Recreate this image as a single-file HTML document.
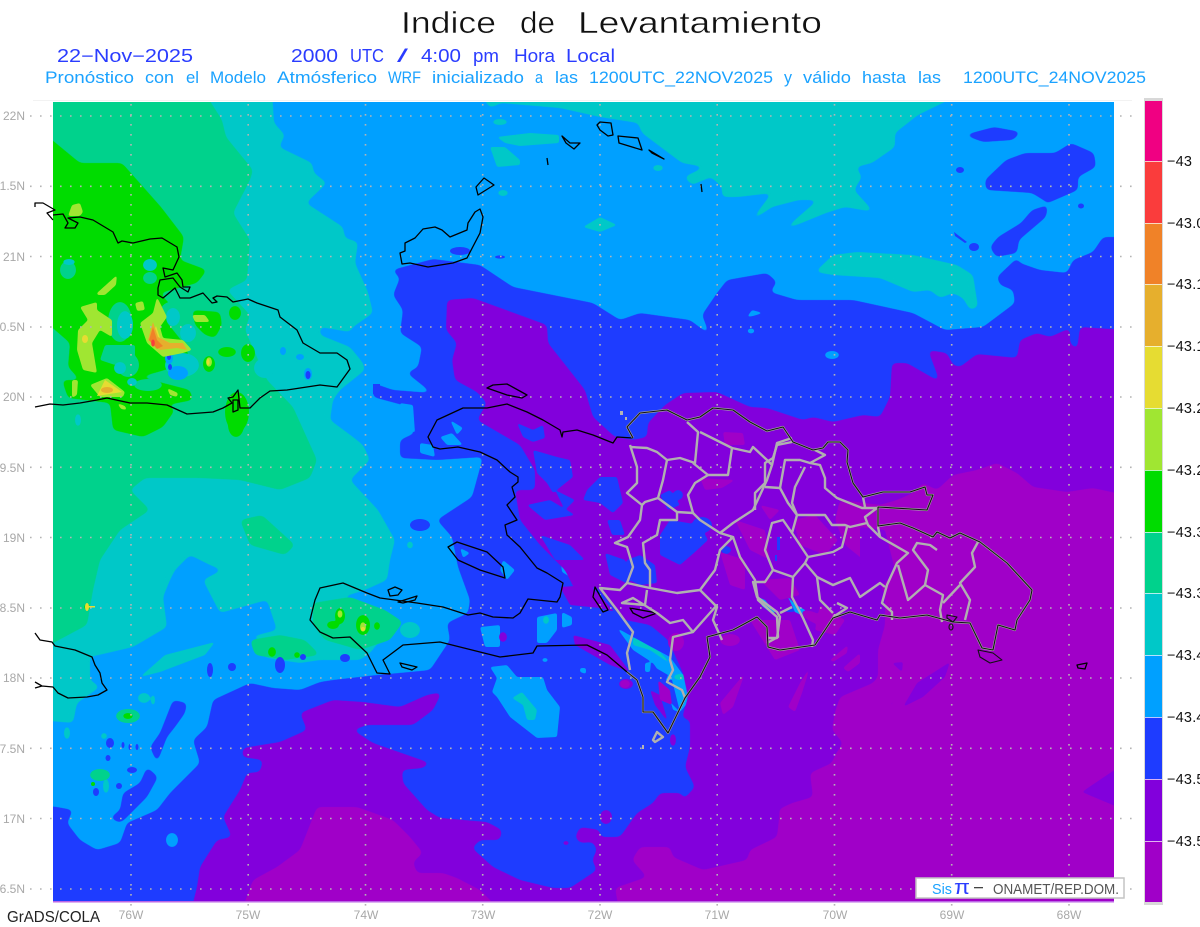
<!DOCTYPE html>
<html lang="es">
<head>
<meta charset="utf-8">
<title>Indice de Levantamiento</title>
<style>
html,body{margin:0;padding:0;background:#fff;}
body{width:1200px;height:927px;overflow:hidden;}
svg{display:block;}
text{font-family:"Liberation Sans",sans-serif;}
</style>
</head>
<body>
<svg width="1200" height="927" viewBox="0 0 1200 927" xmlns="http://www.w3.org/2000/svg">
<defs>
<filter id="s" x="-5%" y="-5%" width="110%" height="110%" color-interpolation-filters="sRGB"><feGaussianBlur stdDeviation="2.6"/><feComponentTransfer><feFuncA type="linear" slope="9" intercept="-4"/></feComponentTransfer></filter>
<filter id="t" x="-10%" y="-10%" width="120%" height="120%" color-interpolation-filters="sRGB"><feGaussianBlur stdDeviation="1"/><feComponentTransfer><feFuncA type="linear" slope="6" intercept="-2.5"/></feComponentTransfer></filter>
</defs>
<rect width="1200" height="927" fill="#fff"/>
<!-- titles -->
<g font-size="31" fill="#111" stroke="#fff" stroke-width=".45" lengthAdjust="spacingAndGlyphs">
<text x="401" y="33" textLength="95" lengthAdjust="spacingAndGlyphs">Indice</text>
<text x="520" y="33" textLength="35" lengthAdjust="spacingAndGlyphs">de</text>
<text x="578" y="33" textLength="244" lengthAdjust="spacingAndGlyphs">Levantamiento</text>
</g>
<g font-size="18" fill="#2a3cff">
<text x="57" y="62" textLength="136" lengthAdjust="spacingAndGlyphs">22−Nov−2025</text>
<text x="291" y="62" textLength="47" lengthAdjust="spacingAndGlyphs">2000</text>
<text x="350" y="62" textLength="34" lengthAdjust="spacingAndGlyphs">UTC</text>
<text x="397" y="62" textLength="11" lengthAdjust="spacingAndGlyphs">/</text>
<text x="421" y="62" textLength="40" lengthAdjust="spacingAndGlyphs">4:00</text>
<text x="473" y="62" textLength="26" lengthAdjust="spacingAndGlyphs">pm</text>
<text x="514" y="62" textLength="41" lengthAdjust="spacingAndGlyphs">Hora</text>
<text x="566" y="62" textLength="49" lengthAdjust="spacingAndGlyphs">Local</text>
</g>
<g font-size="16.5" fill="#1aa2ff">
<text x="45" y="83" textLength="89" lengthAdjust="spacingAndGlyphs">Pronóstico</text>
<text x="145" y="83" textLength="29" lengthAdjust="spacingAndGlyphs">con</text>
<text x="186" y="83" textLength="13" lengthAdjust="spacingAndGlyphs">el</text>
<text x="210" y="83" textLength="56" lengthAdjust="spacingAndGlyphs">Modelo</text>
<text x="277" y="83" textLength="100" lengthAdjust="spacingAndGlyphs">Atmósferico</text>
<text x="388" y="83" textLength="33" lengthAdjust="spacingAndGlyphs">WRF</text>
<text x="432" y="83" textLength="92" lengthAdjust="spacingAndGlyphs">inicializado</text>
<text x="535" y="83" textLength="8" lengthAdjust="spacingAndGlyphs">a</text>
<text x="555" y="83" textLength="23" lengthAdjust="spacingAndGlyphs">las</text>
<text x="589" y="83" textLength="184" lengthAdjust="spacingAndGlyphs">1200UTC_22NOV2025</text>
<text x="784" y="83" textLength="8" lengthAdjust="spacingAndGlyphs">y</text>
<text x="803" y="83" textLength="48" lengthAdjust="spacingAndGlyphs">válido</text>
<text x="862" y="83" textLength="44" lengthAdjust="spacingAndGlyphs">hasta</text>
<text x="918" y="83" textLength="23" lengthAdjust="spacingAndGlyphs">las</text>
<text x="963" y="83" textLength="183" lengthAdjust="spacingAndGlyphs">1200UTC_24NOV2025</text>
</g>
<line x1="33" y1="100.5" x2="1132" y2="100.5" stroke="#f2f2f2"/>

<clipPath id="m"><rect x="53" y="102" width="1061" height="799"/></clipPath>
<g clip-path="url(#m)">
<rect x="53" y="102" width="1061" height="799" fill="#00a0ff"/>
<!-- cyan -->
<g fill="#00c8c8" filter="url(#s)">
<polygon points="40,90 272,90 274,123 285,135 279,147 312,163 314,173 327,183 306,203 343,227 345,238 358,242 355,263 368,292 373,313 353,327 350,332 320,327 320,335 350,347 363,363 365,370 340,390 333,400 330,420 353,437 363,445 370,460 350,480 378,510 395,540 390,560 387,580 365,590 310,607 267,600 220,613 203,580 222,570 210,565 190,555 175,570 170,580 163,597 167,627 133,647 90,657 90,680 100,687 77,703 73,723 40,720"/>
<polygon points="478,90 490,108 501,103 560,108 600,117 638,123 642,133 682,163 705,167 684,177 692,185 711,177 722,187 722,197 738,197 772,193 749,223 772,207 799,200 818,200 782,231 826,213 845,207 874,212 854,190 862,177 856,167 872,163 895,147 895,133 918,115 969,90"/>
<polygon points="815,272 833,255 857,252 913,255 957,265 973,275 978,307 970,310 963,298 953,293 940,298 930,290 913,292 880,278 833,275"/>
<polygon points="267,600 277,630 250,637 267,643 263,657 280,660 300,663 320,660 360,660 370,653 383,637 400,623 390,617 333,593"/>
</g>
<g fill="#00c8c8" filter="url(#t)">
<polygon points="497,137 530,133 559,135 559,143 520,146 505,143"/>
<polygon points="490,147 505,147 520,160 520,165 497,167"/>
<polygon points="583,227 600,217 617,225 600,232"/>
<polygon points="140,677 165,655 215,642 205,655 160,672"/>
<ellipse cx="658" cy="168" rx="5" ry="3"/>
<ellipse cx="500" cy="122" rx="7" ry="3"/>
<ellipse cx="503" cy="193" rx="5" ry="3"/>
<ellipse cx="144" cy="698" rx="6" ry="5"/>
<ellipse cx="153" cy="700" rx="2" ry="5"/>
<ellipse cx="67" cy="733" rx="3" ry="6"/>
<ellipse cx="104" cy="736" rx="3" ry="3"/>
<ellipse cx="106" cy="786" rx="3" ry="7"/>
<ellipse cx="410" cy="630" rx="10" ry="8"/>
</g>
<!-- sea green -->
<g fill="#00d28c" filter="url(#s)">
<polygon points="40,90 203,90 222,120 226,137 253,170 250,180 233,213 250,240 247,280 227,290 250,315 245,330 267,380 293,407 317,460 310,478 280,490 240,480 200,478 145,478 130,490 150,510 120,530 100,560 93,590 87,625 40,650"/>
<polygon points="240,520 262,515 295,545 285,555 250,545"/>
<polygon points="313,603 350,597 385,610 403,622 390,640 360,650 325,640 313,625"/>
<polygon points="250,640 280,635 305,640 320,655 285,660 255,655"/>
</g>
<g fill="#00d28c" filter="url(#t)">
<ellipse cx="128" cy="716" rx="12" ry="7"/>
<ellipse cx="100" cy="775" rx="10" ry="6"/>
</g>
<!-- bright green -->
<g fill="#00dc00" filter="url(#s)">
<polygon points="40,130 80,163 122,163 161,207 184,237 180,260 207,270 197,283 160,293 175,310 165,320 185,345 190,360 165,370 140,377 190,390 193,400 167,405 175,410 163,427 143,437 113,430 110,403 68,398 62,380 80,380 68,367 70,343 40,317"/>
<polygon points="192,310 220,312 222,325 215,338 205,335 195,325"/>
</g>
<g fill="#00dc00" filter="url(#t)">
<ellipse cx="235" cy="313" rx="6" ry="7"/>
<ellipse cx="227" cy="352" rx="9" ry="5"/>
<ellipse cx="248" cy="353" rx="7" ry="9"/>
<ellipse cx="209" cy="364" rx="6" ry="8"/>
<ellipse cx="237" cy="412" rx="12" ry="20"/>
<ellipse cx="236" cy="425" rx="8" ry="12"/>
<ellipse cx="272" cy="652" rx="4" ry="5"/>
<ellipse cx="297" cy="655" rx="3" ry="3"/>
<ellipse cx="340" cy="616" rx="5" ry="8"/>
<ellipse cx="333" cy="625" rx="6" ry="4"/>
<ellipse cx="363" cy="625" rx="7" ry="10"/>
<ellipse cx="377" cy="626" rx="3" ry="4"/>
<ellipse cx="128" cy="716" rx="5" ry="3"/>
<ellipse cx="87" cy="607" rx="3" ry="3"/>
</g>
<ellipse cx="93" cy="784" rx="2" ry="2" fill="#00dc00"/>
<!-- swirl interior -->
<g fill="#00d28c" filter="url(#t)">
<ellipse cx="150" cy="278" rx="7" ry="6"/>
<ellipse cx="68" cy="270" rx="8" ry="9"/>
<ellipse cx="120" cy="322" rx="12" ry="20"/>
<ellipse cx="128" cy="365" rx="11" ry="12"/>
<ellipse cx="175" cy="310" rx="14" ry="9"/>
<polygon points="105,345 135,345 135,355 115,365 100,360"/>
<ellipse cx="148" cy="385" rx="14" ry="6"/>
</g>
<g fill="#00c8c8" filter="url(#t)">
<ellipse cx="125" cy="325" rx="8" ry="14"/>
<ellipse cx="173" cy="317" rx="7" ry="9"/>
<ellipse cx="188" cy="333" rx="8" ry="9"/>
<ellipse cx="150" cy="265" rx="7" ry="6"/>
<ellipse cx="182" cy="365" rx="17" ry="12"/>
<ellipse cx="120" cy="368" rx="6" ry="6"/>
<ellipse cx="132" cy="382" rx="5" ry="4"/>
<ellipse cx="265" cy="368" rx="11" ry="10"/>
<ellipse cx="283" cy="351" rx="6" ry="7"/>
<ellipse cx="300" cy="357" rx="7" ry="6"/>
<ellipse cx="78" cy="420" rx="3" ry="6"/>
<ellipse cx="69" cy="262" rx="6" ry="3"/>
</g>
<g fill="#00a0ff">
<ellipse cx="178" cy="373" rx="10" ry="7"/>
<ellipse cx="169" cy="358" rx="4" ry="6"/>
<ellipse cx="283" cy="351" rx="3" ry="4"/>
<ellipse cx="300" cy="357" rx="4" ry="3"/>
<ellipse cx="308" cy="374" rx="4" ry="6"/>
</g>
<g fill="#1e3cff">
<ellipse cx="169" cy="357" rx="2" ry="3"/>
<ellipse cx="170" cy="367" rx="2" ry="3"/>
<ellipse cx="308" cy="375" rx="2.5" ry="4"/>
<rect x="373" y="384" width="7" height="10"/>
</g>
<!-- lime -->
<g fill="#a0e632" filter="url(#t)">
<polygon points="72,205 80,203 83,212 80,216 68,216"/>
<polygon points="97,293 117,275 116,285 105,295 97,295"/>
<polygon points="80,307 97,302 97,310 112,320 112,337 100,330 92,343 97,373 83,370 77,350 78,330 88,320"/>
<polygon points="90,385 107,378 125,392 123,397 100,397"/>
<polygon points="72,380 78,380 77,395 72,398"/>
<polygon points="157,297 167,317 160,327 163,338 183,340 192,350 183,353 163,357 147,343 140,323 153,313"/>
<polygon points="135,303 143,301 145,310 137,311"/>
<polygon points="192,315 205,315 210,322 195,322"/>
<polygon points="167,388 178,393 177,397 170,395"/>
<polygon points="117,403 125,406 127,410 121,409"/>
<ellipse cx="209" cy="362" rx="3" ry="5"/>
<ellipse cx="363" cy="627" rx="3" ry="5"/>
<ellipse cx="340" cy="614" rx="2.5" ry="4"/>
</g>
<g fill="#e6dc32">
<polygon points="105,380 122,392 97,396"/>
<ellipse cx="85" cy="339" rx="3" ry="4"/>
<ellipse cx="208" cy="362" rx="1.5" ry="3"/>
<ellipse cx="87" cy="607" rx="2" ry="4"/>
<rect x="87" y="606" width="8" height="1.5"/>
<ellipse cx="363" cy="629" rx="2" ry="2"/>
<polygon points="156,326 160,338 172,344 165,345 150,340"/>
</g>
<g fill="#e6af2d">
<polygon points="153,322 158,337 170,343 183,343 187,350 177,348 160,350 148,340"/>
<ellipse cx="107" cy="390" rx="6" ry="3"/>
</g>
<g fill="#f08228"><polygon points="153,327 157,340 163,346 157,349 149,340"/></g>
<g fill="#fa3c3c"><ellipse cx="153" cy="343" rx="1.8" ry="3.5"/></g>

<!-- blue -->
<g fill="#1e3cff" filter="url(#s)">
<polygon points="392,270 433,259 480,265 513,287 593,303 620,320 640,313 690,320 710,335 702,315 717,293 727,280 767,273 777,282 770,292 797,300 853,300 913,313 945,330 983,327 1015,303 1013,290 1000,285 997,277 1017,258 1020,263 1040,270 1067,273 1073,260 1093,252 1103,237 1125,237 1125,915 40,915 40,805 57,807 73,810 67,823 80,840 97,850 120,843 127,823 157,810 170,793 200,763 193,740 207,727 213,700 250,683 273,688 300,690 320,682 333,680 377,675 410,672 430,670 450,640 447,623 468,613 470,600 458,567 452,537 437,520 472,497 483,457 437,460 400,458 400,440 415,433 408,420 415,417 410,407 373,397 373,383 393,390 432,393 407,373 418,367 422,347 400,333 403,310 393,295 400,278"/>
<polygon points="173,700 187,703 185,713 175,727 167,737 157,763 150,747 160,733"/>
<polygon points="147,767 158,777 147,797 127,817 120,823 110,818 120,810 123,793 140,783"/>
<polygon points="964,135 994,127 1021,132 1013,140 983,142"/>
<polygon points="1071,143 1094,153 1096,167 1078,177 1078,190 1048,203 1032,193 986,190 985,180 1006,160 1025,153 1055,153"/>
<polygon points="1048,205 1046,217 1019,240 1017,253 996,257 990,247 998,237 1021,223 1032,210"/>
</g>
<g fill="#1e3cff">
<ellipse cx="960" cy="170" rx="4" ry="3"/>
<ellipse cx="1081" cy="206" rx="3" ry="2.5"/>
<polygon points="954,232 967,242 965,243 955,236"/>
<ellipse cx="974" cy="247" rx="5" ry="4"/>
<ellipse cx="460" cy="251" rx="10" ry="4"/>
<ellipse cx="500" cy="257" rx="5" ry="1.6"/>
<ellipse cx="210" cy="670" rx="3" ry="7"/>
<ellipse cx="232" cy="667" rx="4" ry="4"/>
<ellipse cx="280" cy="665" rx="5" ry="8"/>
<ellipse cx="303" cy="657" rx="3" ry="3"/>
<ellipse cx="345" cy="658" rx="5" ry="4"/>
<ellipse cx="110" cy="743" rx="4" ry="5"/>
<ellipse cx="132" cy="770" rx="5" ry="3"/>
<ellipse cx="96" cy="792" rx="3" ry="4"/>
<ellipse cx="119" cy="786" rx="3" ry="3"/>
<ellipse cx="108" cy="758" rx="2.5" ry="3"/>
<ellipse cx="130" cy="747" rx="1.5" ry="3"/>
<ellipse cx="137" cy="747" rx="1.5" ry="3"/>
<ellipse cx="123" cy="745" rx="1.5" ry="3"/>
<ellipse cx="420" cy="525" rx="10" ry="6"/>
</g>
<!-- sky patches in blue -->
<g fill="#00a0ff" filter="url(#t)">
<polygon points="747,317 752,310 763,313 753,316"/>
<ellipse cx="751" cy="331" rx="3.5" ry="2.5"/>
<ellipse cx="832" cy="355" rx="7" ry="4"/>
<ellipse cx="172" cy="840" rx="6" ry="7"/>
<polygon points="490,667 507,665 517,677 543,677 547,690 560,707 557,737 537,738 510,717 497,697 492,692 497,678"/>
<polygon points="440,437 452,433 463,445 447,445"/>
<polygon points="450,420 463,428 457,435"/>
<polygon points="420,443 433,445 435,457 420,453"/>
<polygon points="400,403 413,405 415,433 400,425"/>
<polygon points="503,560 515,570 507,580 500,570"/>
<polygon points="560,555 568,560 570,572 590,577 575,580 562,572"/>
<polygon points="460,548 470,553 463,558"/>
<polygon points="537,617 557,613 557,630 547,643 537,643"/>
<polygon points="480,627 500,625 500,647 485,647"/>
<polygon points="562,612 572,617 572,625 562,628"/>
<ellipse cx="545" cy="660" rx="3" ry="2"/>
<polygon points="617,628 633,637 670,657 687,680 690,700 680,712 673,710 665,680 653,663 633,650"/>
<polygon points="645,663 651,662 650,672 645,672"/>
<polygon points="580,668 586,668 586,674 580,672"/>
</g>
<g fill="#1e3cff">
<polygon points="665,680 672,680 680,712 668,700"/>
<polygon points="656,668 668,675 665,682 655,680"/>
</g>
<g fill="#00c8c8" filter="url(#t)">
<polygon points="512,698 522,692 537,710 535,720 527,720 523,705"/>
<polygon points="633,637 660,652 672,665 650,650 633,645"/>
<ellipse cx="680" cy="677" rx="6" ry="3"/>
<ellipse cx="410" cy="545" rx="3" ry="3.5"/>
<ellipse cx="546" cy="620" rx="3" ry="4"/>
</g>
<!-- violet -->
<g fill="#8200dc" filter="url(#s)">
<polygon points="447,300 473,298 547,325 548,343 567,367 585,390 593,417 615,437 633,440 647,437 648,423 665,405 683,393 717,392 750,407 767,408 803,420 813,417 833,422 863,415 880,417 890,397 892,363 907,363 940,382 928,350 947,353 953,365 960,367 977,354 1017,358 1020,340 1037,333 1050,337 1070,328 1070,343 1077,350 1080,327 1125,330 1125,915 190,915 197,887 200,867 217,840 232,837 223,817 240,790 247,773 260,772 263,760 242,757 243,748 280,742 307,730 300,713 333,700 363,702 400,707 427,695 442,692 433,710 413,725 367,725 353,730 373,743 413,757 430,763 423,768 402,770 403,783 427,810 440,818 487,822 502,830 500,840 480,840 472,848 493,867 520,880 553,888 570,888 597,870 592,860 597,850 593,842 580,843 575,837 580,827 600,830 600,837 620,837 637,813 653,803 660,793 682,793 683,800 695,787 685,767 690,747 690,720 682,718 688,697 683,673 668,640 650,625 625,620 615,610 597,587 575,590 565,570 540,545 520,520 515,490 535,490 535,470 520,445 477,420 487,403 477,392 455,380 452,360 457,343 446,330"/>
</g>
<g fill="#8200dc" filter="url(#t)">
<polygon points="573,635 610,645 630,672 610,665 575,645"/>
<polygon points="560,587 590,585 615,612 600,608 570,605"/>
<polygon points="650,690 660,695 668,722 655,705"/>
<ellipse cx="626" cy="684" rx="7" ry="5"/>
<ellipse cx="673" cy="740" rx="3" ry="6"/>
<ellipse cx="606" cy="817" rx="6" ry="7"/>
<ellipse cx="566" cy="843" rx="3" ry="2"/>
<ellipse cx="503" cy="637" rx="4" ry="5"/>
</g>
<!-- blue within violet -->
<g fill="#1e3cff" filter="url(#t)">
<polygon points="517,423 533,430 543,425 545,438 533,442 523,437"/>
<polygon points="533,450 557,457 570,460 573,477 553,493 547,483 537,473"/>
<polygon points="600,477 617,477 623,503 613,513 600,503 583,500 587,490"/>
<polygon points="527,505 550,500 575,515 545,520"/>
<polygon points="607,520 620,520 625,535 612,535"/>
<polygon points="555,490 575,500 565,510"/>
<polygon points="627,560 640,555 655,565 657,583 640,585 625,578"/>
<polygon points="660,495 670,490 680,505 668,510"/>
<polygon points="670,520 700,525 708,540 695,552 680,565 660,555 660,535"/>
<ellipse cx="678" cy="495" rx="5" ry="5"/>
<ellipse cx="726" cy="550" rx="5" ry="4"/>
<ellipse cx="702" cy="525" rx="10" ry="8"/>
<polygon points="540,535 570,545 585,560 555,560"/>
<polygon points="605,553 625,560 630,585 610,575"/>
<ellipse cx="790" cy="610" rx="7" ry="2"/>
</g>
<g fill="#1e3cff"><rect x="777" y="537" width="3" height="13"/><rect x="775" y="555" width="2" height="6"/></g>
<g fill="#00a0ff">
<polygon points="758,597 765,600 775,612 772,614 762,606"/>
<polygon points="788,597 795,604 805,610 803,616 795,612"/>
</g>
<!-- magenta -->
<g fill="#a000c8" filter="url(#s)">
<polygon points="840,500 880,505 897,500 913,493 923,483 937,490 953,475 977,470 997,463 1017,473 1033,487 1067,492 1093,488 1125,495 1125,763 1082,792 1125,810 1125,915 620,915 615,888 647,877 632,860 640,847 670,847 673,857 703,870 747,860 750,850 777,837 780,810 773,812 792,803 813,797 810,773 832,763 835,755 843,743 832,730 835,712 840,697 873,683 878,677 878,650 885,625 885,595 870,565 845,545 835,520"/>
<polygon points="240,915 253,880 277,867 300,850 317,807 357,807 393,820 410,837 423,853 413,862 417,873 443,873 457,878 480,890 505,915"/>
</g>
<g fill="#a000c8" filter="url(#t)">
<polygon points="788,707 800,683 810,667 802,693 795,712"/>
<polygon points="830,660 848,645 847,653 833,662"/>
<polygon points="843,668 860,653 860,663 848,672"/>
<polygon points="720,703 745,673 733,707 723,715"/>
<polygon points="793,520 815,515 838,540 825,555 800,545"/>
<polygon points="760,580 790,578 800,595 780,600"/>
<polygon points="750,620 790,620 800,650 775,660"/>
<polygon points="820,605 845,620 835,635 815,630"/>
<polygon points="720,552 745,560 745,590 730,585"/>
<polygon points="723,432 743,433 745,445 725,445"/>
<polygon points="735,520 765,530 770,560 750,550"/>
<polygon points="700,478 735,480 722,488 705,490"/>
<polygon points="658,680 670,690 672,705 660,700"/>
<polygon points="760,505 780,510 770,520"/>
<ellipse cx="676" cy="642" rx="8" ry="9"/>
<ellipse cx="730" cy="640" rx="10" ry="6"/>
<ellipse cx="625" cy="684" rx="5" ry="4"/>
<ellipse cx="815" cy="618" rx="14" ry="5" transform="rotate(25 815 618)"/>
</g>
<g fill="#8200dc" filter="url(#t)">
<polygon points="903,707 917,683 950,662 945,677 923,697"/>
<polygon points="889,707 898,692 892,705"/>
<polygon points="892,663 903,662 902,672"/>
<polygon points="860,527 885,530 895,570 880,590 860,565"/>
<polygon points="1125,763 1082,792 1125,810"/>
</g>
</g>

<!-- grid -->
<g stroke="#b4b4b4" stroke-width="1.6" stroke-dasharray="1.6 8.4" fill="none">
<path d="M30 116H1132M30 186.3H1132M30 256.5H1132M30 327H1132M30 397H1132M30 467.3H1132M30 537.5H1132M30 608H1132M30 678H1132M30 748.3H1132M30 818.5H1132M30 889H1132"/>
<path d="M131 104V909M248.2 104V909M365.5 104V909M482.7 104V909M600 104V909M717.2 104V909M834.5 104V909M951.7 104V909M1069 104V909"/>
</g>
<rect x="53" y="901" width="1061" height="1.5" fill="#bb66e6"/>

<!-- coastlines -->
<g fill="none" stroke="#000" stroke-width="1.3" stroke-linejoin="round">
<path d="M35,207L35,203L43,203L55,210L47,213L53,220"/>
<path d="M53,215L63,214L68,223L65,228L75,228L78,223L68,218L80,217L93,220L113,232L118,243L122,241L133,243L150,239L162,238L177,247L179,257L173,270L163,268L165,277L177,273L182,280L183,287L190,287L188,292L180,287L173,278L160,280L158,288L158,295L163,298L175,288L180,298L190,298L203,293L212,303L217,302L213,298L217,296L227,297L233,302L248,299L257,303L278,310L280,317L297,330L303,343L320,353L337,353L347,360L350,369L337,387L320,385L287,390L270,391L260,398L250,408L240,408L238,390L233,397L228,398L232,403L223,408L213,412L187,414L167,405L147,403L130,403L107,398L97,400L80,403L63,405L50,404L35,407"/>
<path d="M233,412L238,410L238,400L233,400Z"/>
<path d="M35,633L40,640L52,642L55,646L75,650L92,657L95,665L100,673L102,683L107,690L98,695L87,697L68,698L58,693L53,687L42,686L35,688M35,682L42,686"/>
<path d="M402,264L400,253L405,251L405,243L415,238L423,229L435,227L442,230L450,237L467,230L468,223L475,212L480,209L483,217L480,233L467,258L453,263L428,267L410,263Z"/>
<path d="M476,187L484,178L494,185L478,195Z"/>
<path d="M562,136L566,143L574,149L580,143L570,143Z"/>
<path d="M547,158L548,165"/>
<path d="M600,122L611,123L613,135L608,136L600,130L597,125Z"/>
<path d="M618,136L638,138L642,150L619,143Z"/>
<path d="M649,150L664,159L652,153Z"/>
<path d="M701,184L702,192"/>
<path d="M487,388L493,385L507,384L527,395L522,398L507,395Z"/>
<path d="M633,438L617,437L613,443L593,435L577,430L563,432L562,437L560,430L543,420L527,412L507,404L487,408L463,408L437,420L428,437L433,447L440,449L458,447L480,452L497,460L510,472L518,477L518,482L512,487L515,497L507,505L517,520L505,525L507,535L520,547L537,568L547,573L563,583L560,597L557,602L528,599L520,613L513,618L493,617L480,613L468,615L443,607L417,603L380,598L367,593L343,583L320,588L315,600L310,620L320,632L333,638L350,637L367,653L377,673L390,674L383,660L403,645L440,642L460,647L500,657L533,653L537,646L587,645L607,655L627,672"/>
<path d="M448,547L457,542L487,552L503,567L505,578L480,570L458,560Z"/>
<path d="M388,590L395,587L402,590L398,595L390,596Z"/>
<path d="M398,602L417,596L415,600L403,603Z"/>
<path d="M400,663L417,667L412,670L402,667Z"/>
<path d="M630,608L657,613L643,618L633,613Z"/>
<path d="M595,587L608,610L603,612L593,597Z"/>
<path d="M1077,665L1087,663L1085,669L1078,668Z"/>
</g>
<!-- provinces -->
<g fill="none" stroke="#b0b0b0" stroke-width="2.4" stroke-linejoin="round">
<path d="M630,445L637,467L637,483L627,493L642,505L640,520L628,537L615,543L627,547L633,567L627,583L620,590L600,588L617,610L633,632L627,653L630,670"/>
<path d="M630,447L647,448L657,452L667,460L680,458L695,463L698,432L687,422"/>
<path d="M667,460L663,480L658,498L645,502L642,505"/>
<path d="M658,498L677,512L693,513L688,495L695,483L708,475L693,463"/>
<path d="M708,475L728,475L732,448L700,432"/>
<path d="M732,448L750,452L753,447L767,460L772,465L767,480L753,510L733,523L720,533L700,520L693,513"/>
<path d="M772,465L777,443L792,438"/>
<path d="M677,512L677,520L660,520L657,535L643,543L645,563L650,570L650,587"/>
<path d="M627,583L650,588L677,593L700,590L715,570L720,550L733,537L720,533"/>
<path d="M700,590L717,607L713,620L722,640"/>
<path d="M647,590L645,605L622,603L633,598L657,613L670,623L683,620L693,632L717,605"/>
<path d="M693,632L673,637L670,660L673,670L667,682L682,690L685,698"/>
<path d="M733,537L740,557L755,580L758,600L777,617L778,637L767,643"/>
<path d="M792,442L777,445L773,458L765,463L765,483L755,493L755,510"/>
<path d="M765,487L780,488L785,460L800,460L810,463L825,455L815,450"/>
<path d="M780,488L788,503L797,515"/>
<path d="M810,463L820,465L825,478L825,488L837,498L862,508L877,508L865,517L868,525L880,537L908,553L897,563L887,585L882,603L892,612L892,620"/>
<path d="M805,467L795,487L792,503L797,515L825,515L832,525L845,525L850,527L867,523"/>
<path d="M797,515L792,533L808,557L833,552L842,547L847,527"/>
<path d="M808,557L805,563L817,577L833,585L850,578L860,597L880,583L885,587"/>
<path d="M805,563L793,577L773,570L765,550L772,523L783,520L792,533"/>
<path d="M773,570L765,582L753,582L757,597L777,612L780,617L777,638L767,638"/>
<path d="M793,577L792,597L803,618L813,640L812,647"/>
<path d="M817,577L820,600L833,613M837,603L847,608L833,617"/>
<path d="M792,607L780,613"/>
<path d="M898,565L908,600L925,585L928,570L913,550L917,543L930,545L937,550"/>
<path d="M925,585L943,595L940,610L942,622"/>
<path d="M978,542L972,553L975,567L960,583L970,600L965,620"/>
<path d="M960,585L943,603"/>
<path d="M863,497L865,507M880,537L878,527"/>
<path d="M657,732L663,737L655,742L653,740Z"/>
</g>
<g fill="#b4b4b4"><rect x="620" y="411" width="3" height="4"/><rect x="625" y="417" width="2" height="3"/><rect x="642" y="745" width="2" height="4"/></g>
<!-- DR coast -->
<g fill="none" stroke="#a8a8a8" stroke-width="2.2" stroke-linejoin="round">
<path d="M633,438L627,427L640,413L667,410L687,420L700,417L713,408L733,410L750,422L767,431L783,427L793,442L813,450L823,448L828,442L840,442L848,450L847,462L853,483L863,497L883,492L910,492L925,487L927,495L933,495L927,510L878,507L878,526L900,523L913,528L933,537L937,532L950,538L960,533L980,542L1007,563L1032,590L1030,600L1017,620L1015,630L998,625L993,650L982,648L970,623L953,622L927,615L900,618L880,615L877,620L850,612L833,618L815,645L780,650L768,647L767,627L757,617L733,630L707,637L710,657L700,677L685,698L668,733L653,712L643,712L643,697L637,680L627,672"/>
</g>
<g fill="none" stroke="#111" stroke-width="1.1" stroke-linejoin="round">
<path d="M633,438L627,427L640,413L667,410L687,420L700,417L713,408L733,410L750,422L767,431L783,427L793,442L813,450L823,448L828,442L840,442L848,450L847,462L853,483L863,497L883,492L910,492L925,487L927,495L933,495L927,510L878,507L878,526L900,523L913,528L933,537L937,532L950,538L960,533L980,542L1007,563L1032,590L1030,600L1017,620L1015,630L998,625L993,650L982,648L970,623L953,622L927,615L900,618L880,615L877,620L850,612L833,618L815,645L780,650L768,647L767,627L757,617L733,630L707,637L710,657L700,677L685,698L668,733L653,712L643,712L643,697L637,680L627,672"/>
<path d="M978,650L993,653L1002,660L990,663L980,657Z"/>
<path d="M947,615L957,617L953,622L947,618Z"/>
<ellipse cx="951" cy="627" rx="2" ry="3"/>
</g>
<!-- left labels -->
<g font-size="12" fill="#a8a8a8" text-anchor="end">
<text x="25" y="120">22N</text><text x="25" y="190">1.5N</text><text x="25" y="261">21N</text><text x="25" y="331">0.5N</text><text x="25" y="401">20N</text><text x="25" y="472">9.5N</text><text x="25" y="542">19N</text><text x="25" y="612">8.5N</text><text x="25" y="682">18N</text><text x="25" y="753">7.5N</text><text x="25" y="823">17N</text><text x="25" y="893">6.5N</text>
</g>
<g font-size="12" fill="#a8a8a8" text-anchor="middle">
<text x="131" y="919">76W</text><text x="248" y="919">75W</text><text x="366" y="919">74W</text><text x="483" y="919">73W</text><text x="600" y="919">72W</text><text x="717" y="919">71W</text><text x="835" y="919">70W</text><text x="952" y="919">69W</text><text x="1069" y="919">68W</text>
</g>
<text x="7" y="922" font-size="15.5" fill="#222" textLength="93" lengthAdjust="spacingAndGlyphs">GrADS/COLA</text>

<!-- logo box -->
<rect x="916" y="878" width="208" height="20" fill="#fff" stroke="#c4c4c4" stroke-width="1.5"/>
<text x="932" y="894" font-size="15" fill="#1aa2ff" textLength="20" lengthAdjust="spacingAndGlyphs">Sis</text>
<text x="954" y="894" font-size="20" fill="#2a3cff" textLength="16" lengthAdjust="spacingAndGlyphs">π</text>
<rect x="974" y="887" width="9" height="1.3" fill="#444"/>
<text x="993" y="894" font-size="15" fill="#555" textLength="126" lengthAdjust="spacingAndGlyphs">ONAMET/REP.DOM.</text>

<!-- colorbar -->
<rect x="1144" y="98" width="19" height="807" fill="#d8d8d8"/>
<g>
<rect x="1145" y="101" width="17" height="60" fill="#f00082"/>
<rect x="1145" y="161" width="17" height="62" fill="#fa3c3c"/>
<rect x="1145" y="223" width="17" height="61" fill="#f08228"/>
<rect x="1145" y="284" width="17" height="62" fill="#e6af2d"/>
<rect x="1145" y="346" width="17" height="62" fill="#e6dc32"/>
<rect x="1145" y="408" width="17" height="62" fill="#a0e632"/>
<rect x="1145" y="470" width="17" height="62" fill="#00dc00"/>
<rect x="1145" y="532" width="17" height="61" fill="#00d28c"/>
<rect x="1145" y="593" width="17" height="62" fill="#00c8c8"/>
<rect x="1145" y="655" width="17" height="62" fill="#00a0ff"/>
<rect x="1145" y="717" width="17" height="62" fill="#1e3cff"/>
<rect x="1145" y="779" width="17" height="62" fill="#8200dc"/>
<rect x="1145" y="841" width="17" height="61" fill="#a000c8"/>
</g>
<g stroke="#fff" stroke-width="1" opacity=".7">
<path d="M1145 161.5H1162M1145 223.5H1162M1145 284.5H1162M1145 346.5H1162M1145 408.5H1162M1145 470.5H1162M1145 532.5H1162M1145 593.5H1162M1145 655.5H1162M1145 717.5H1162M1145 779.5H1162M1145 841.5H1162"/>
</g>
<g font-size="14.5" fill="#111" letter-spacing=".2">
<text x="1167" y="166">−43</text>
<text x="1167" y="228">−43.05</text>
<text x="1167" y="289">−43.1</text>
<text x="1167" y="351">−43.15</text>
<text x="1167" y="413">−43.2</text>
<text x="1167" y="475">−43.25</text>
<text x="1167" y="537">−43.3</text>
<text x="1167" y="598">−43.35</text>
<text x="1167" y="660">−43.4</text>
<text x="1167" y="722">−43.45</text>
<text x="1167" y="784">−43.5</text>
<text x="1167" y="846">−43.55</text>
</g>
</svg>
</body>
</html>
